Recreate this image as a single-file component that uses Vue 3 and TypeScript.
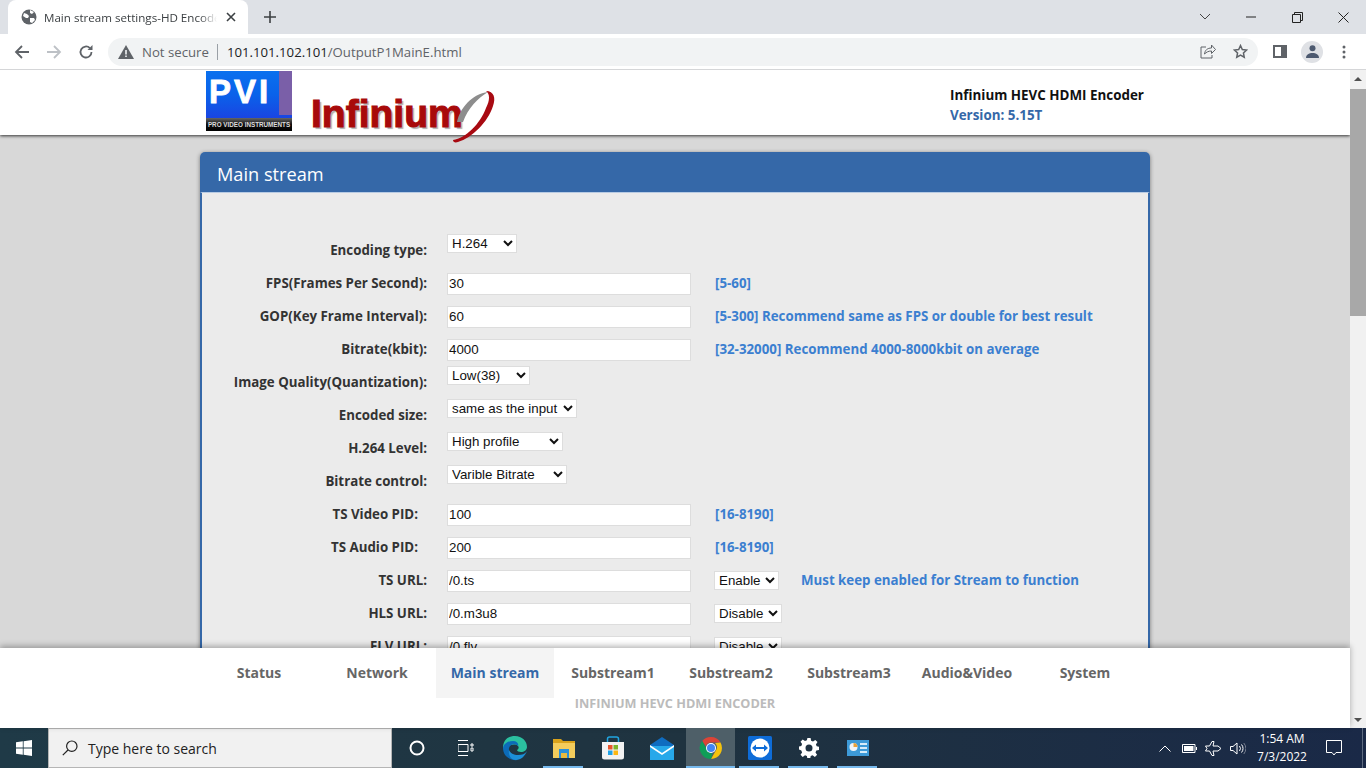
<script setup lang="ts">
interface Row {
  label: string;
  value?: string;
  select?: string;
  width?: number;
  extra?: string;
  extraWidth?: number;
  hint?: string;
  pid?: boolean;
}

const rows: Row[] = [
  { label: "Encoding type:", select: "H.264", width: 70 },
  { label: "FPS(Frames Per Second):", value: "30", hint: "[5-60]" },
  { label: "GOP(Key Frame Interval):", value: "60", hint: "[5-300] Recommend same as FPS or double for best result" },
  { label: "Bitrate(kbit):", value: "4000", hint: "[32-32000] Recommend 4000-8000kbit on average" },
  { label: "Image Quality(Quantization):", select: "Low(38)", width: 83 },
  { label: "Encoded size:", select: "same as the input", width: 130 },
  { label: "H.264 Level:", select: "High profile", width: 116 },
  { label: "Bitrate control:", select: "Varible Bitrate", width: 120 },
  { label: "TS Video PID:", value: "100", hint: "[16-8190]", pid: true },
  { label: "TS Audio PID:", value: "200", hint: "[16-8190]", pid: true },
  { label: "TS URL:", value: "/0.ts", extra: "Enable", extraWidth: 65, hint: "Must keep enabled for Stream to function" },
  { label: "HLS URL:", value: "/0.m3u8", extra: "Disable", extraWidth: 68 },
  { label: "FLV URL:", value: "/0.flv", extra: "Disable", extraWidth: 68 },
];

const tabs = ["Status", "Network", "Main stream", "Substream1", "Substream2", "Substream3", "Audio&Video", "System"];
</script>

<template>
  <div class="screen">
    <div class="tabstrip">
      <div class="tab">
        <svg width="16" height="16" viewBox="0 0 16 16" class="favicon">
          <circle cx="8" cy="8" r="7.5" fill="#5f6368" />
          <path d="M3 4l3 1 2 2-1 2-2 0-3-2zM9 1l4 2-2 2-2-1zM9 9l4 0 1 2-3 3-2-1z" fill="#fff" />
        </svg>
        <span class="tab-title">Main stream settings-HD Encoder</span>
        <svg width="10" height="10" viewBox="0 0 10 10" class="tab-close">
          <path d="M1 1l8 8M9 1l-8 8" stroke="#3c4043" stroke-width="1.6" />
        </svg>
      </div>
      <svg width="12" height="12" viewBox="0 0 12 12" class="newtab">
        <path d="M6 0v12M0 6h12" stroke="#3c4043" stroke-width="1.6" />
      </svg>
      <div class="win-controls">
        <svg width="12" height="8" viewBox="0 0 12 8"><path d="M1 1l5 5 5-5" fill="none" stroke="#444" /></svg>
        <svg width="10" height="2" viewBox="0 0 10 2"><path d="M0 1h10" stroke="#222" /></svg>
        <svg width="11" height="11" viewBox="0 0 11 11"><path d="M.5 2.5h8v8h-8zM2.5 2.5v-2h8v8h-2" fill="none" stroke="#222" /></svg>
        <svg width="11" height="11" viewBox="0 0 11 11"><path d="M.5.5l10 10M10.5.5l-10 10" stroke="#222" /></svg>
      </div>
    </div>

    <div class="toolbar">
      <svg width="16" height="14" viewBox="0 0 16 14"><path d="M15 7H2M8 1L2 7l6 6" fill="none" stroke="#5f6368" stroke-width="1.8" /></svg>
      <svg width="16" height="14" viewBox="0 0 16 14"><path d="M1 7h13M8 1l6 6-6 6" fill="none" stroke="#bdc1c6" stroke-width="1.8" /></svg>
      <svg width="16" height="16" viewBox="0 0 16 16"><path d="M13.5 8a5.5 5.5 0 1 1-1.6-3.9" fill="none" stroke="#5f6368" stroke-width="1.8" /><path d="M14.5 1v5h-5z" fill="#5f6368" /></svg>
      <div class="omnibox">
        <svg width="16" height="14" viewBox="0 0 16 14"><path d="M8 0l8 14H0z" fill="#5f6368" /><path d="M7.2 5h1.6v4.5H7.2zM7.2 10.5h1.6V12H7.2z" fill="#f1f3f4" /></svg>
        <span class="not-secure">Not secure</span>
        <span class="omni-sep"></span>
        <span class="url">101.101.102.101<span class="url-path">/OutputP1MainE.html</span></span>
        <span class="omni-gap"></span>
        <svg width="16" height="15" viewBox="0 0 16 15"><path d="M6 3H1v11h11v-3M4.500 10c.5-4 3-6 7-6V1l4 4.500-4 4V7c-3 0-5 1-7 3z" fill="none" stroke="#5f6368" /></svg>
        <svg class="star" width="15" height="15" viewBox="0 0 24 24"><path d="M12 2.500l2.900 6.300 6.800.8-5 4.700 1.300 6.800-6-3.400-6 3.400 1.300-6.800-5-4.700 6.800-.8z" fill="none" stroke="#5f6368" stroke-width="2.400" /></svg>
      </div>
      <div class="toolbar-right">
        <svg width="14" height="13" viewBox="0 0 14 13"><path d="M0 0h14v13H0z" fill="#5f6368" /><path d="M2 2h6v9H2z" fill="#fff" /></svg>
        <div class="avatar">
          <svg width="13" height="13" viewBox="0 0 13 13"><circle cx="6.500" cy="3.200" r="3" fill="#4d5a70" /><path d="M0 13c0-3.500 3-5 6.500-5s6.500 1.500 6.500 5z" fill="#4d5a70" /></svg>
        </div>
        <svg width="4" height="14" viewBox="0 0 4 14"><circle cx="2" cy="2" r="1.500" fill="#5f6368" /><circle cx="2" cy="7" r="1.500" fill="#5f6368" /><circle cx="2" cy="12" r="1.500" fill="#5f6368" /></svg>
      </div>
    </div>

    <div class="viewport">
      <div class="page">
        <div class="scroll-area">
          <header class="site-header">
            <div class="pvi-logo">
              <div class="pvi-top">
                <span class="pvi-text">PVI</span>
                <span class="pvi-bar"></span>
              </div>
              <div class="pvi-band">PRO VIDEO INSTRUMENTS</div>
            </div>
            <div class="infinium">
              <span class="infinium-text">Infinium</span>
              <svg class="swoosh" width="46" height="54" viewBox="0 0 46 54">
                <path d="M7 32C10 18 22 4 38 2 28 8 18 18 13 32z" fill="#8d8d8d" />
                <path d="M36 1c8 0 10 7 7 15C38 32 22 48 8 52c-3 1-5 0-5-2 13-2 27-16 33-32 4-8 4-14 0-17z" fill="#a80a12" />
              </svg>
            </div>
            <div class="device">
              <div class="device-name">Infinium HEVC HDMI Encoder</div>
              <div class="device-version">Version: 5.15T</div>
            </div>
          </header>

          <section class="panel">
            <h2 class="panel-title">Main stream</h2>
            <div class="panel-body">
              <div v-for="row in rows" :key="row.label" class="form-row">
                <div class="label-cell">
                  <label class="form-label" :class="{ 'pid-label': row.pid }">{{ row.label }}</label>
                </div>
                <select v-if="row.select" class="field-select top" :style="{ width: row.width + 'px' }">
                  <option>{{ row.select }}</option>
                </select>
                <template v-else>
                  <input class="field-input" type="text" :value="row.value" />
                  <select v-if="row.extra" class="field-select extra" :style="{ width: row.extraWidth + 'px' }">
                    <option>{{ row.extra }}</option>
                  </select>
                  <span v-if="row.hint" class="hint" :class="{ 'hint-after': row.extra }">{{ row.hint }}</span>
                </template>
              </div>
            </div>
          </section>
        </div>

        <footer class="bottom-nav">
          <nav class="nav-items">
            <a v-for="tab in tabs" :key="tab" class="nav-item" :class="{ active: tab === 'Main stream' }">{{ tab }}</a>
          </nav>
          <div class="nav-caption">INFINIUM HEVC HDMI ENCODER</div>
        </footer>
      </div>

      <div class="scrollbar">
        <span class="arrow-up"></span>
        <span class="thumb"></span>
        <span class="arrow-down"></span>
      </div>
    </div>

    <div class="taskbar">
      <div class="start">
        <svg width="16" height="16" viewBox="0 0 16 16"><path d="M0 2.300l6.800-1v6.300H0zM7.600 1.200L16 0v7.600H7.600zM0 8.400h6.800v6.300l-6.800-1zM7.600 8.400H16V16l-8.400-1.200z" fill="#fff" /></svg>
      </div>
      <div class="search">
        <svg width="16" height="16" viewBox="0 0 16 16"><circle cx="9.800" cy="6.200" r="5.200" fill="none" stroke="#222" stroke-width="1.200" /><path d="M6 10L.8 15.200" stroke="#222" stroke-width="1.200" /></svg>
        <span>Type here to search</span>
      </div>
      <div class="task-icons">
        <div class="task-icon">
          <svg width="16" height="16" viewBox="0 0 16 16"><circle cx="8" cy="8" r="6.500" fill="none" stroke="#fff" stroke-width="2" /></svg>
        </div>
        <div class="task-icon">
          <svg width="16" height="16" viewBox="0 0 16 16"><path d="M0 .5h10M0 15.500h10M0 4.500h10v7H0zM13 4h2v2h-2zM13 8h2v3h-2z" fill="none" stroke="#fff" /></svg>
        </div>
        <div class="task-icon">
          <svg width="26" height="26" viewBox="0 0 26 26">
            <path d="M1 13C1 5 6 1 13 1c7 0 12 5 12 11 0 3-3 5-6 5-2 0-4-1-4-2 2-1 2-3 1-4-2-2-7-2-10 1-3 2-4 3-5 1z" fill="#2bc0a0" />
            <path d="M1 13c1-5 6-7 10-7 4 0 6 3 5 5-3-3-8-2-9 2-1 5 4 10 9 12-8 1-15-4-15-12z" fill="#0c6bb8" />
            <path d="M25 16c-2 5-6 9-11 9-5 0-8-5-7-10 1 3 5 5 9 5 4 0 7-1 9-4z" fill="#1c8fd6" />
          </svg>
        </div>
        <div class="task-icon open">
          <svg width="22" height="20" viewBox="0 0 22 20">
            <path d="M0 1h8l2 2h12v4H0z" fill="#d9a21b" />
            <path d="M0 5h22v15H0z" fill="#f3cc5c" />
            <path d="M6 11h10v9h-2v-5H8v5H6z" fill="#2a8fd8" />
            <path d="M8 15h6v5H8z" fill="#e8b93e" />
          </svg>
        </div>
        <div class="task-icon">
          <svg width="24" height="24" viewBox="0 0 24 24">
            <path d="M1 6h22v15a2.500 2.500 0 0 1-2.500 2.500h-17A2.500 2.500 0 0 1 1 21z" fill="#f2f2f2" />
            <path d="M6.500 6V3c0-1 .5-2 2-2h7c1.500 0 2 1 2 2v3" fill="none" stroke="#21a5e0" stroke-width="1.500" />
            <path d="M7 9h4.500v4.500H7z" fill="#e8552d" /><path d="M12.500 9H17v4.500h-4.500z" fill="#7db52c" />
            <path d="M7 14.500h4.500V19H7z" fill="#1fa3e8" /><path d="M12.500 14.500H17V19h-4.500z" fill="#fcb712" />
          </svg>
        </div>
        <div class="task-icon">
          <svg width="24" height="23" viewBox="0 0 24 23">
            <path d="M0 8l12-8 12 8v15H0z" fill="#0f6cc0" />
            <path d="M0 9h24v14H0z" fill="#27a8ea" />
            <path d="M0 8l12 8 12-8v2L12 18 0 10z" fill="#fff" />
          </svg>
        </div>
        <div class="task-icon open active">
          <svg width="24" height="24" viewBox="0 0 24 24">
            <path d="M12 1a11 11 0 0 1 9.500 5.500H12a5.500 5.500 0 0 0-5.200 3.700L3.200 5A11 11 0 0 1 12 1z" fill="#db4437" />
            <path d="M21.500 6.500A11 11 0 0 1 12 23l4.700-8.200A5.500 5.500 0 0 0 16 7z" fill="#f4c20d" />
            <path d="M12 23A11 11 0 0 1 3.200 5l4.600 8.500a5.500 5.500 0 0 0 5.700 3.800z" fill="#0f9d58" />
            <circle cx="12" cy="12" r="5" fill="#fff" /><circle cx="12" cy="12" r="4" fill="#4285f4" />
          </svg>
        </div>
        <div class="task-icon open">
          <svg width="24" height="24" viewBox="0 0 24 24">
            <rect width="24" height="24" rx="1.500" fill="#0e6cd8" />
            <circle cx="12" cy="12" r="9.500" fill="#fff" />
            <path d="M4 12l4-3.500V11h8V8.500l4 3.500-4 3.500V13H8v2.500z" fill="#0e6cd8" />
          </svg>
        </div>
        <div class="task-icon open">
          <svg width="20" height="20" viewBox="0 0 20 20">
            <path d="M8.400 0h3.200l.5 2.700 1.900.8 2.300-1.600 2.200 2.200-1.600 2.300.8 1.900 2.300.5v3.200l-2.700.5-.8 1.900 1.600 2.300-2.200 2.200-2.300-1.600-1.900.8-.5 2.700H8.400l-.5-2.700-1.900-.8-2.300 1.600-2.200-2.200 1.600-2.300-.8-1.900L0 11.600V8.400l2.300-.5.800-1.900-1.600-2.300 2.200-2.200L6 3.100l1.900-.8zM10 6.500a3.500 3.500 0 1 0 0 7 3.500 3.500 0 0 0 0-7z" fill="#fff" fill-rule="evenodd" />
          </svg>
        </div>
        <div class="task-icon open">
          <svg width="22" height="16" viewBox="0 0 22 16">
            <path d="M0 0h22v16H0z" fill="#3d9ad8" />
            <circle cx="6.500" cy="7" r="4" fill="#f2f6fa" />
            <path d="M6.500 7V3a4 4 0 0 1 4 4z" fill="#e9a23b" />
            <path d="M13 3h7v2h-7zM13 7h7v2h-7zM13 11h7v2h-7z" fill="#d6ecfa" />
          </svg>
        </div>
      </div>
      <div class="tray">
        <svg width="12" height="7" viewBox="0 0 12 7"><path d="M.5 6.500L6 1l5.500 5.500" fill="none" stroke="#fff" /></svg>
        <svg class="battery" width="15" height="9" viewBox="0 0 15 9"><path d="M.5.5h12.500v8H.5z" fill="none" stroke="#fff" /><path d="M2 2h9.500v5H2z" fill="#fff" /><path d="M14 3h1v3h-1z" fill="#fff" /></svg>
        <svg width="17" height="15" viewBox="0 0 17 15"><path d="M.5 5h4L7 .5h2L8 5h5l3 2.500-3 2.500H8l1 4.500H7L4.500 10h-4l1.500-2.500z" fill="none" stroke="#fff" /></svg>
        <svg width="16" height="13" viewBox="0 0 16 13"><path d="M.5 4.500h2.500L7 1v11L3 8.500H.5z" fill="none" stroke="#fff" /><path d="M9.500 4a4 4 0 0 1 0 5M11.500 2.500a6 6 0 0 1 0 8" fill="none" stroke="#fff" /><path d="M13.800 1a9 9 0 0 1 0 11" fill="none" stroke="#777f90" /></svg>
        <div class="clock">
          <div>1:54 AM</div>
          <div>7/3/2022</div>
        </div>
        <svg class="notify" width="16" height="16" viewBox="0 0 16 16"><path d="M.5.500h15v12h-5.500L8 15l-2-2.500H.5z" fill="none" stroke="#fff" /></svg>
        <span class="desk-line"></span>
      </div>
    </div>
  </div>
</template>

<style scoped>
.screen {
  width: 1366px;
  height: 768px;
  display: flex;
  flex-direction: column;
  overflow: hidden;
  font-family: "Open Sans", "Liberation Sans", sans-serif;
}

.tabstrip {
  height: 34px;
  flex: none;
  display: flex;
  align-items: flex-end;
  background: #dee1e6;
}

.tab {
  width: 240px;
  height: 34px;
  margin-left: 8px;
  padding: 0 12px;
  box-sizing: border-box;
  display: flex;
  align-items: center;
  border-radius: 8px 8px 0 0;
  background: #fff;
}

.favicon {
  flex: none;
  margin-left: 1px;
}

.tab-title {
  width: 175px;
  margin-left: 7px;
  overflow: hidden;
  white-space: nowrap;
  font-size: 11.6px;
  color: #3c4043;
  -webkit-mask-image: linear-gradient(90deg, #000 90%, transparent 100%);
  mask-image: linear-gradient(90deg, #000 90%, transparent 100%);
}

.tab-close {
  margin-left: 9px;
  flex: none;
}

.newtab {
  margin: 0 0 11px 16px;
}

.win-controls {
  margin-left: auto;
  align-self: stretch;
  width: 184px;
  display: grid;
  grid-template-columns: 46px 46px 46px 46px;
  justify-items: center;
  align-items: center;
}

.toolbar {
  height: 36px;
  box-sizing: border-box;
  flex: none;
  display: flex;
  align-items: center;
  padding-left: 14px;
  gap: 16px;
  background: #fff;
  border-bottom: 1px solid #d5d6d8;
}

.omnibox {
  width: 1150px;
  height: 28px;
  margin-left: -2px;
  padding: 0 10px 0 10px;
  box-sizing: border-box;
  display: flex;
  align-items: center;
  border-radius: 14px;
  background: #f1f3f4;
  font-size: 13.2px;
}

.not-secure {
  margin-left: 8px;
  color: #5f6368;
}

.omni-sep {
  width: 1px;
  height: 16px;
  margin: 0 9px 0 8px;
  background: #9aa0a6;
}

.url {
  color: #202124;
}

.url-path {
  color: #5f6368;
}

.omni-gap {
  flex: 1;
}

.star {
  margin-left: 17px;
}

.toolbar-right {
  display: flex;
  align-items: center;
  margin-left: -1px;
}

.avatar {
  width: 22px;
  height: 22px;
  margin: 0 19px 0 14px;
  display: grid;
  place-items: center;
  border-radius: 50%;
  background: #dfe1e5;
}

.viewport {
  flex: 1;
  min-height: 0;
  display: flex;
}

.page {
  flex: 1;
  min-width: 0;
  display: flex;
  flex-direction: column;
}

.scroll-area {
  flex: 1;
  min-height: 0;
  overflow: hidden;
  background: #d8d8d8;
}

.site-header {
  height: 65px;
  position: relative;
  display: flex;
  padding-left: 206px;
  background: #fff;
  box-shadow: 0 1px 3px #333;
}

.pvi-logo {
  width: 86px;
  height: 60px;
  margin-top: 1px;
  display: flex;
  flex-direction: column;
}

.pvi-top {
  flex: 1;
  display: flex;
  justify-content: space-between;
  background: linear-gradient(180deg, #0a70ee 0%, #0a62ea 50%, #1a45e2 100%);
}

.pvi-text {
  margin: 4px 0 0 3px;
  font-family: "Liberation Sans", sans-serif;
  font-size: 33px;
  line-height: 34px;
  font-weight: 700;
  letter-spacing: 3px;
  -webkit-text-stroke: 0.8px #fff;
  color: #fff;
}

.pvi-bar {
  width: 13px;
  height: 44px;
  background: #7a5fa8;
}

.pvi-band {
  height: 13px;
  text-align: center;
  font-family: "Liberation Sans", sans-serif;
  font-size: 6.3px;
  line-height: 13px;
  font-weight: 700;
  white-space: nowrap;
  color: #ddd;
  background: linear-gradient(180deg, #666, #111 50%, #000);
}

.infinium {
  margin: 20px 0 0 19px;
  display: flex;
  align-items: flex-start;
  height: 54px;
}

.infinium-text {
  margin-top: 2px;
  font-family: "Liberation Sans", sans-serif;
  font-size: 39px;
  line-height: 44px;
  font-weight: 700;
  color: #a80a0a;
  -webkit-text-stroke: 1.1px #a80a0a;
  text-shadow: 2px 2px 1px #b0b0b0;
}

.swoosh {
  margin-left: -13px;
  flex: none;
}

.device {
  margin: 15px 0 0 auto;
  width: 400px;
  font-size: 13.4px;
  line-height: 20px;
  font-weight: 700;
}

.device-name {
  color: #111;
}

.device-version {
  color: #3568a8;
}

.panel {
  width: 950px;
  margin: 17px 0 0 200px;
  border-radius: 5px 5px 0 0;
  box-shadow: 0 1px 4px rgba(0, 0, 0, 0.45);
}

.panel-title {
  height: 40px;
  margin: 0;
  padding-left: 17px;
  border-radius: 5px 5px 0 0;
  font-size: 18.2px;
  line-height: 44px;
  font-weight: 400;
  color: #fff;
  background: #3568a8;
}

.panel-body {
  padding: 41px 0 0 0;
  border: 2px solid #3568a8;
  border-top: 1px solid #b8cbe3;
  background: #ebebeb;
}

.form-row {
  height: 33px;
  display: flex;
  align-items: center;
}

.label-cell {
  width: 225px;
  margin: -4px 20px 0 0;
  flex: none;
  text-align: right;
}

.form-label {
  font-size: 13.3px;
  font-weight: 700;
  color: #333;
}

.pid-label {
  margin-right: 9px;
}

.field-input {
  width: 244px;
  height: 22px;
  flex: none;
  box-sizing: border-box;
  padding: 0 1px;
  border: 1px solid #ddd;
  background: #fff;
  font-family: "Liberation Sans", sans-serif;
  font-size: 13.33px;
  color: #111;
  outline: none;
}

.field-select {
  height: 19px;
  flex: none;
  box-sizing: border-box;
  padding: 0;
  border: 1px solid #ddd;
  border-radius: 0;
  background-color: #fff;
  font-family: "Liberation Sans", sans-serif;
  font-size: 13.33px;
  color: #111;
}

.field-select.top {
  align-self: flex-start;
}

.field-select.extra {
  margin-left: 23px;
}

.hint {
  margin: -2px 0 0 24px;
  font-size: 13.3px;
  font-weight: 700;
  color: #3b7fd0;
}

.hint.hint-after {
  margin-left: 22px;
}

.bottom-nav {
  height: 80px;
  flex: none;
  position: relative;
  background: #fff;
  box-shadow: 0 -2px 6px rgba(0, 0, 0, 0.3);
}

.nav-items {
  display: flex;
  height: 50px;
  padding-left: 200px;
}

.nav-item {
  width: 118px;
  text-align: center;
  font-size: 14px;
  line-height: 50px;
  font-weight: 700;
  color: #666;
}

.nav-item.active {
  color: #3568a8;
  background: #f4f4f4;
}

.nav-caption {
  width: 950px;
  margin-left: 200px;
  text-align: center;
  font-size: 12.7px;
  line-height: 10px;
  font-weight: 700;
  color: #bbb;
}

.scrollbar {
  width: 16px;
  flex: none;
  display: flex;
  flex-direction: column;
  align-items: center;
  background: #f1f1f1;
}

.arrow-up,
.arrow-down {
  width: 0;
  height: 0;
  border-left: 4px solid transparent;
  border-right: 4px solid transparent;
}

.arrow-up {
  margin-top: 7px;
  border-bottom: 4px solid #505050;
}

.arrow-down {
  margin: auto 0 6px;
  border-top: 4px solid #505050;
}

.thumb {
  width: 16px;
  height: 227px;
  margin-top: 8px;
  background: #a8a8a8;
}

.taskbar {
  height: 40px;
  flex: none;
  display: flex;
  background: linear-gradient(90deg, #1f3a47 0%, #1f3340 50%, #1a2947 100%);
}

.start {
  width: 48px;
  display: grid;
  place-items: center;
}

.search {
  width: 344px;
  box-sizing: border-box;
  padding-left: 13px;
  display: flex;
  align-items: center;
  gap: 10px;
  background: #f1f1f1;
  border: 1px solid #b5b5b5;
  font-family: "Open Sans", sans-serif;
  font-size: 14px;
  color: #222;
}

.task-icons {
  display: flex;
}

.task-icon {
  width: 49px;
  height: 40px;
  box-sizing: border-box;
  display: grid;
  place-items: center;
  position: relative;
}

.task-icon.open::after {
  content: "";
  position: absolute;
  left: 4px;
  right: 5px;
  bottom: 0;
  height: 2px;
  background: #76b9ed;
}

.task-icon.active {
  background: #4e5f68;
}

.task-icon.active::after {
  left: 0;
  right: 0;
}

.tray {
  margin-left: auto;
  width: 207px;
  display: flex;
  align-items: center;
  gap: 8px;
  box-sizing: border-box;
}

.battery {
  margin-left: 3px;
}

.clock {
  width: 62px;
  margin-left: -3px;
  text-align: center;
  font-size: 12px;
  line-height: 18px;
  white-space: nowrap;
  color: #fff;
}

.notify {
  margin-left: 5px;
}

.desk-line {
  width: 1px;
  height: 100%;
  margin-left: 12px;
  background: #5e6b80;
}
</style>

<style>
html,
body {
  margin: 0;
  overflow: hidden;
}
</style>
